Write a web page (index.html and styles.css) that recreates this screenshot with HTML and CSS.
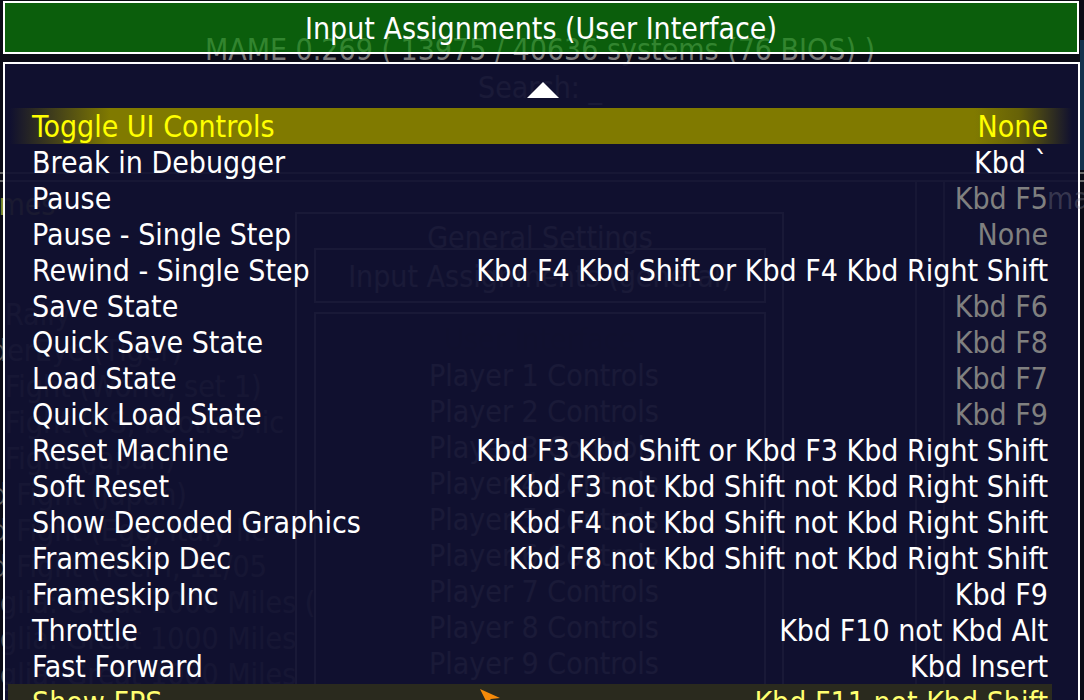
FILE: index.html
```html
<!DOCTYPE html>
<html lang="en">
<head>
<meta charset="utf-8">
<title>Input Assignments (User Interface)</title>
<link rel="stylesheet" href="styles.css">
</head>
<body>
<div class="ghost" aria-hidden="true">
  <div class="g-line g-h1"></div>
  <div class="g-line g-h2"></div>
  <div class="g-line g-v1"></div>
  <div class="g-line g-v2"></div>
  <div class="g-box g-outer"></div>
  <div class="g-box g-inner1"></div>
  <div class="g-box g-inner2"></div>
  <div class="g-side"></div>
  <div class="g-text g-center g-mame">MAME 0.269 ( 13975 / 40636 systems (76 BIOS) )</div>
  <div class="g-text g-center g-search">Search: _</div>
  <div class="g-text g-center g-general">General Settings</div>
  <div class="g-text g-center g-inputgen">Input Assignments (general)</div>
  <div class="g-text g-center g-ui">User Interface</div>
  <div class="g-text g-player" style="top:358px">Player 1 Controls</div>
  <div class="g-text g-player" style="top:394px">Player 2 Controls</div>
  <div class="g-text g-player" style="top:430px">Player 3 Controls</div>
  <div class="g-text g-player" style="top:466px">Player 4 Controls</div>
  <div class="g-text g-player" style="top:502px">Player 5 Controls</div>
  <div class="g-text g-player" style="top:538px">Player 6 Controls</div>
  <div class="g-text g-player" style="top:574px">Player 7 Controls</div>
  <div class="g-text g-player" style="top:610px">Player 8 Controls</div>
  <div class="g-text g-player" style="top:646px">Player 9 Controls</div>
  <div class="g-text g-player" style="top:682px">Player 10 Controls</div>
  <div class="g-text g-game g-yellow" style="top:187px;left:-20px">Ames</div>
  <div class="g-text g-game" style="top:297px;left:5px">Rally</div>
  <div class="g-text g-game" style="top:333px;left:-10px">derEye (Tiger)</div>
  <div class="g-text g-game" style="top:369px;left:5px">Fight (World, set 1)</div>
  <div class="g-text g-game" style="top:405px;left:5px">Fight (US, bootleg lic</div>
  <div class="g-text g-game" style="top:441px;left:5px">Fight (Japan)</div>
  <div class="g-text g-game" style="top:477px;left:-20px">rd Fight (Japan)</div>
  <div class="g-text g-game" style="top:513px;left:-20px">rd Fight (Ego, Italy lic</div>
  <div class="g-text g-game" style="top:549px;left:-20px">rd Fight (Tecfri, 11/05</div>
  <div class="g-text g-game" style="top:585px;left:0px">glia: Great 1000 Miles (</div>
  <div class="g-text g-game" style="top:621px;left:0px">glia: Great 1000 Miles</div>
  <div class="g-text g-game" style="top:657px;left:0px">glia: Great 1000 Miles</div>
</div>

<div class="screen">
  <header class="title">Input Assignments (User Interface)</header>
  <section class="menu">
    <div class="arrow-row">
      <svg class="arrow" width="32" height="16" viewBox="0 0 32 16"><polygon points="16,0 32,16 0,16" fill="#ffffff"/></svg>
    </div>
    <ul class="items">
      <li class="item selected"><span class="label">Toggle UI Controls</span><span class="value">None</span></li>
      <li class="item"><span class="label">Break in Debugger</span><span class="value">Kbd `</span></li>
      <li class="item"><span class="label">Pause</span><span class="value dim">Kbd F5</span></li>
      <li class="item"><span class="label">Pause - Single Step</span><span class="value dim">None</span></li>
      <li class="item"><span class="label">Rewind - Single Step</span><span class="value">Kbd F4 Kbd Shift or Kbd F4 Kbd Right Shift</span></li>
      <li class="item"><span class="label">Save State</span><span class="value dim">Kbd F6</span></li>
      <li class="item"><span class="label">Quick Save State</span><span class="value dim">Kbd F8</span></li>
      <li class="item"><span class="label">Load State</span><span class="value dim">Kbd F7</span></li>
      <li class="item"><span class="label">Quick Load State</span><span class="value dim">Kbd F9</span></li>
      <li class="item"><span class="label">Reset Machine</span><span class="value">Kbd F3 Kbd Shift or Kbd F3 Kbd Right Shift</span></li>
      <li class="item"><span class="label">Soft Reset</span><span class="value">Kbd F3 not Kbd Shift not Kbd Right Shift</span></li>
      <li class="item"><span class="label">Show Decoded Graphics</span><span class="value">Kbd F4 not Kbd Shift not Kbd Right Shift</span></li>
      <li class="item"><span class="label">Frameskip Dec</span><span class="value">Kbd F8 not Kbd Shift not Kbd Right Shift</span></li>
      <li class="item"><span class="label">Frameskip Inc</span><span class="value">Kbd F9</span></li>
      <li class="item"><span class="label">Throttle</span><span class="value">Kbd F10 not Kbd Alt</span></li>
      <li class="item"><span class="label">Fast Forward</span><span class="value">Kbd Insert</span></li>
      <li class="item hover"><span class="label">Show FPS</span><span class="value">Kbd F11 not Kbd Shift</span></li>
    </ul>
  </section>
</div>

<div class="ghost-top" aria-hidden="true">ma</div>
<svg class="cursor" width="22" height="14" viewBox="0 0 22 14" aria-hidden="true"><polygon points="0,0 20,9 11,10 7,14" fill="#f58a0a"/></svg>
</body>
</html>
```

FILE: styles.css
```css
html, body {
  margin: 0;
  padding: 0;
}

body {
  position: relative;
  width: 1084px;
  height: 700px;
  overflow: hidden;
  background: #0b0b16;
  color: #ffffff;
  font-family: "DejaVu Sans Condensed", "DejaVu Sans", sans-serif;
  font-size: 30px;
  line-height: 36px;
}

/* faint menus left behind the current one */
.ghost {
  position: absolute;
  inset: 0;
  z-index: 0;
}

.g-text {
  position: absolute;
  white-space: nowrap;
  color: #8a8a8a;
}

.g-center {
  left: 0;
  width: 1080px;
  text-align: center;
}

.g-mame { top: 32px; color: #7a7a7a; }
.g-search { top: 70px; }
.g-general { top: 220px; }
.g-inputgen { top: 259px; }
.g-ui { top: 322px; color: #000000; }
.g-player { left: 429px; }
.g-game { color: #5c5c5c; }
.g-yellow { color: #8a8a30; }

.g-line {
  position: absolute;
  background: #6a6a6a;
}
.g-h1 { left: 0; top: 172px; width: 1084px; height: 2px; }
.g-h2 { left: 0; top: 180px; width: 1084px; height: 2px; }
.g-v1 { left: 915px; top: 180px; width: 2px; height: 520px; }
.g-v2 { left: 943px; top: 180px; width: 2px; height: 520px; }

.g-box {
  position: absolute;
  border: 2px solid #7a7a7a;
  box-sizing: border-box;
}
.g-outer { left: 295px; top: 212px; width: 489px; height: 520px; }
.g-inner1 { left: 314px; top: 248px; width: 452px; height: 55px; }
.g-inner2 { left: 314px; top: 312px; width: 452px; height: 420px; }

.g-side {
  position: absolute;
  left: 1080px;
  top: 40px;
  width: 4px;
  height: 130px;
  background: #12324c;
}

.ghost-top {
  position: absolute;
  z-index: 2;
  top: 181px;
  left: 1047px;
  color: rgba(140, 140, 150, 0.32);
  white-space: nowrap;
}

/* current menu */
.screen {
  position: relative;
  z-index: 1;
  display: flex;
  flex-direction: column;
  gap: 8px;
  padding: 1px 0 0 3px;
}

.title {
  box-sizing: border-box;
  width: 1076px;
  height: 53px;
  border: 2px solid #ffffff;
  background: rgba(13, 140, 8, 0.65);
  display: flex;
  align-items: center;
  justify-content: center;
  padding-top: 2px;
}

.menu {
  box-sizing: border-box;
  width: 1077px;
  height: 700px;
  border: 2px solid #ffffff;
  background: rgba(17, 17, 49, 0.93);
}

.arrow-row {
  box-sizing: border-box;
  height: 44px;
  padding-top: 18px;
  display: flex;
  justify-content: center;
}

.arrow {
  display: block;
  margin-left: 2px;
}

.items {
  list-style: none;
  margin: 0;
  padding: 0;
}

.item {
  box-sizing: border-box;
  height: 36px;
  padding: 1px 30px 0 27px;
  display: flex;
  justify-content: space-between;
  white-space: nowrap;
}

.dim {
  color: #808080;
}

.selected {
  color: #ffff00;
  background-image: linear-gradient(90deg,
    rgba(128, 122, 0, 0) 0%,
    rgba(128, 122, 0, 1) 9.4%,
    rgba(128, 122, 0, 1) 90.8%,
    rgba(118, 112, 0, 0.85) 95%,
    rgba(128, 122, 0, 0) 100%);
  background-repeat: no-repeat;
  background-position: 5px 0;
  background-size: 1062px 36px;
}

.hover {
  color: #ffff70;
  background-image: linear-gradient(#2a2a1e, #2a2a1e);
  background-repeat: no-repeat;
  background-position: 3px 0;
  background-size: 1044px 36px;
}

.cursor {
  position: absolute;
  z-index: 3;
  left: 480px;
  top: 689px;
}
```
